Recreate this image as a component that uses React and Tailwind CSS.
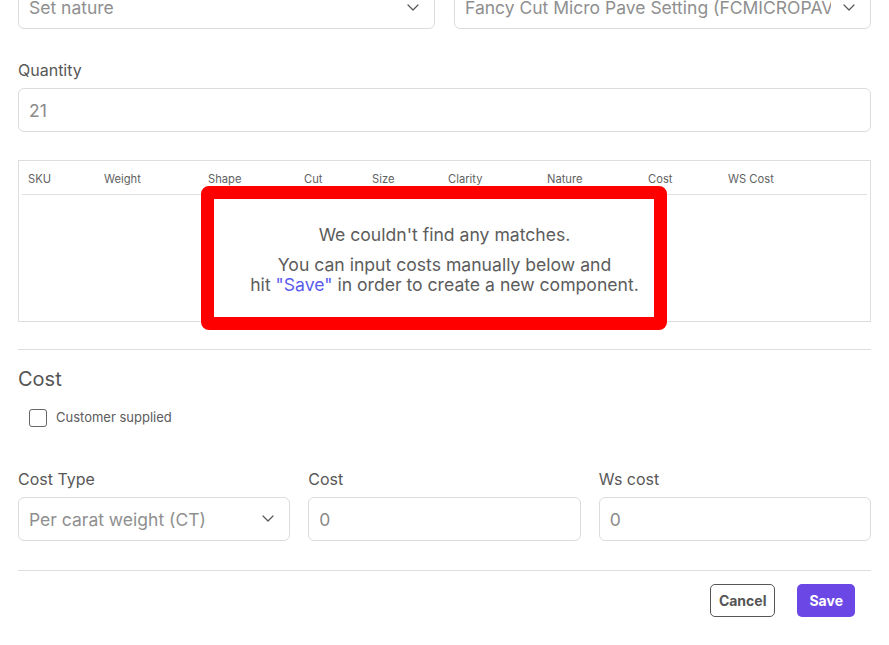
import React from 'react';

const COLUMNS = ['SKU', 'Weight', 'Shape', 'Cut', 'Size', 'Clarity', 'Nature', 'Cost', 'WS Cost'];

const Chevron = () => (
  <svg width="12" height="7" viewBox="0 0 12 7" fill="none" className="shrink-0">
    <path d="M1 1l5 5 5-5" stroke="#555" strokeWidth="1.2" strokeLinecap="round" strokeLinejoin="round" />
  </svg>
);

const Select = ({ value }) => (
  <div className="flex items-center h-[44px] rounded-[6px] border border-[#dcdcdc] bg-white pl-[10px] pr-[15px] gap-3">
    <span className="flex-1 overflow-hidden whitespace-nowrap pt-[3px] text-[17.5px] text-[#8f8f8f]">{value}</span>
    <Chevron />
  </div>
);

const Input = ({ value }) => (
  <div className="flex items-center h-[44px] rounded-[6px] border border-[#dcdcdc] bg-white px-[10px] pt-[3px] text-[17.5px] text-[#8a8a8a]">
    {value}
  </div>
);

const Label = ({ children }) => (
  <div className="text-[16px] leading-[22px] text-[#585858]">{children}</div>
);

export default function App() {
  return (
    <div className="relative w-[889px] h-[645px] overflow-hidden bg-white font-['Inter','Liberation_Sans',sans-serif]">
      <div className="-mt-[15px] px-[18px]">
        {/* top selects */}
        <div className="grid grid-cols-2 gap-[19px]">
          <Select value="Set nature" />
          <Select value="Fancy Cut Micro Pave Setting (FCMICROPAVE)" />
        </div>

        {/* quantity */}
        <div className="mt-[30px]">
          <Label>Quantity</Label>
          <div className="mt-[7px]">
            <Input value="21" />
          </div>
        </div>

        {/* results table */}
        <div className="mt-[28px] h-[162px] border border-[#dedede] px-[3px] pt-[3px]">
          <div className="grid grid-cols-[76px_104px_96px_68px_76px_99px_101px_80px_1fr] h-[31px] items-center border-b border-[#e0e0e0] text-[11.2px] text-[#5f5f5f]">
            {COLUMNS.map((c) => (
              <div key={c} className="pl-[6px]">{c}</div>
            ))}
          </div>
          <div className="pt-[30px] text-center text-[17.6px] leading-[20px] text-[#5c5c5c]">
            <p>We couldn't find any matches.</p>
            <p className="mt-[10px]">You can input costs manually below and</p>
            <p>
              hit <span className="text-[#5b5bf0]">"Save"</span> in order to create a new component.
            </p>
          </div>
        </div>

        <div className="mt-[27px] border-t border-[#dedede]" />

        {/* cost section */}
        <div className="mt-[16px] text-[20px] leading-[26px] text-[#555]">Cost</div>
        <label className="mt-[16px] ml-[11px] flex items-center gap-[9px]">
          <span className="w-[18px] h-[18px] rounded-[3px] border border-[#666] bg-white" />
          <span className="text-[13px] text-[#5c5c5c]">Customer supplied</span>
        </label>

        <div className="mt-[40px] grid grid-cols-3 gap-[18px]">
          <div>
            <Label>Cost Type</Label>
            <div className="mt-[7px]">
              <Select value="Per carat weight (CT)" />
            </div>
          </div>
          <div>
            <Label>Cost</Label>
            <div className="mt-[7px]">
              <Input value="0" />
            </div>
          </div>
          <div>
            <Label>Ws cost</Label>
            <div className="mt-[7px]">
              <Input value="0" />
            </div>
          </div>
        </div>

        <div className="mt-[29px] border-t border-[#dedede]" />

        <div className="mt-[13px] flex justify-end gap-[22px] pr-[16px]">
          <button className="h-[33px] px-[8px] rounded-[5px] border border-[#555] text-[14px] font-bold text-[#555] bg-white">
            Cancel
          </button>
          <button className="h-[33px] px-[12px] rounded-[5px] bg-[#6b48e6] text-[14px] font-bold text-white">
            Save
          </button>
        </div>
      </div>

      {/* red annotation frame */}
      <div className="absolute left-[201px] top-[186px] w-[466px] h-[144px] border-[13px] border-[#ff0000] rounded-[8px] pointer-events-none" />
    </div>
  );
}
